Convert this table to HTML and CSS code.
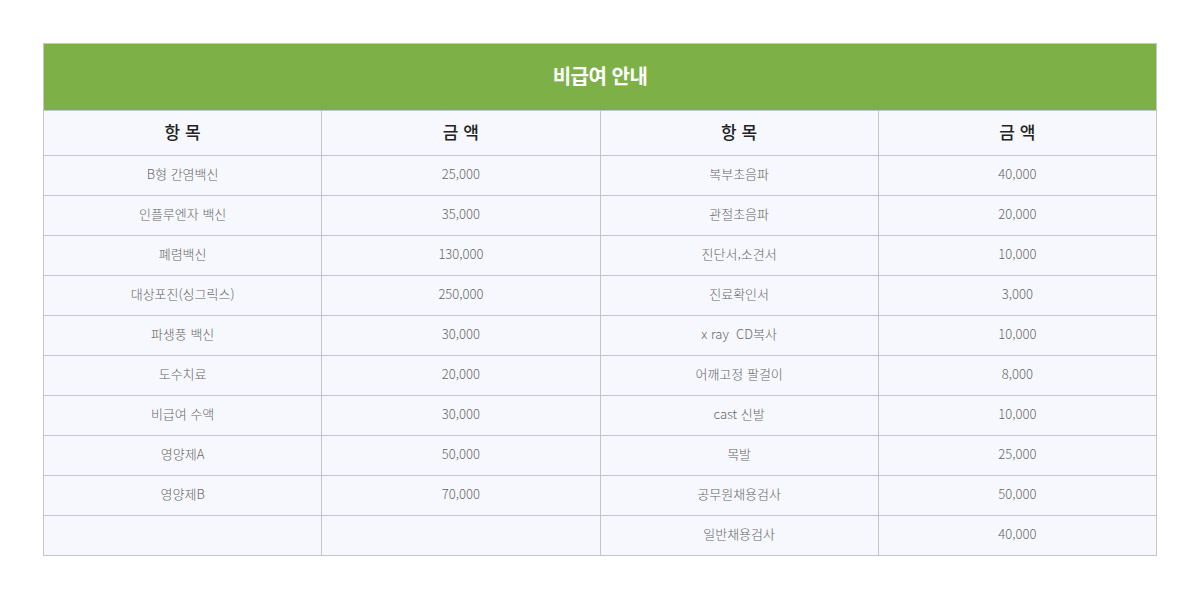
FILE: index.html
```html
<!DOCTYPE html>
<html lang="ko">
<head>
<meta charset="utf-8">
<link rel="stylesheet" href="styles.css">
</head>
<body>
<div class="wrap">
<table class="fee">
<thead>
<tr><th colspan="4" class="title">비급여 안내</th></tr>
<tr class="head"><th>항 목</th><th>금 액</th><th>항 목</th><th>금 액</th></tr>
</thead>
<tbody>
<tr><td>B형 간염백신</td><td>25,000</td><td>복부초음파</td><td>40,000</td></tr>
<tr><td>인플루엔자 백신</td><td>35,000</td><td>관절초음파</td><td>20,000</td></tr>
<tr><td>폐렴백신</td><td>130,000</td><td>진단서,소견서</td><td>10,000</td></tr>
<tr><td>대상포진(싱그릭스)</td><td>250,000</td><td>진료확인서</td><td>3,000</td></tr>
<tr><td>파생풍 백신</td><td>30,000</td><td>x ray&nbsp; CD복사</td><td>10,000</td></tr>
<tr><td>도수치료</td><td>20,000</td><td>어깨고정 팔걸이</td><td>8,000</td></tr>
<tr><td>비급여 수액</td><td>30,000</td><td>cast 신발</td><td>10,000</td></tr>
<tr><td>영양제A</td><td>50,000</td><td>목발</td><td>25,000</td></tr>
<tr><td>영양제B</td><td>70,000</td><td>공무원채용검사</td><td>50,000</td></tr>
<tr><td></td><td></td><td>일반채용검사</td><td>40,000</td></tr>
</tbody>
</table>
</div>
</body>
</html>
```
FILE: styles.css
```css
html, body { margin: 0; padding: 0; background: #fff; }
body { font-family: "Noto Sans CJK KR", "Noto Sans", sans-serif; }
.wrap { padding: 43px 43px 0 43px; }
.fee {
  width: 1114px;
  border-collapse: collapse;
  table-layout: fixed;
  background: #f7f8fd;
}
.fee th, .fee td {
  border: 1px solid #c4c5cc;
  text-align: center;
  padding: 0 0 4px 0;
}
.fee .title {
  background: #7db148;
  color: #fff;
  font-size: 20px;
  font-weight: 700;
  height: 62px;
  padding-bottom: 4px;
  letter-spacing: -0.5px;
}
.fee .head th {
  height: 40px;
  padding-bottom: 4px;
  font-size: 17px;
  font-weight: 500;
  color: #222;
}
.fee td {
  height: 35px;
  font-size: 13px;
  font-weight: 300;
  color: #666;
}
```
